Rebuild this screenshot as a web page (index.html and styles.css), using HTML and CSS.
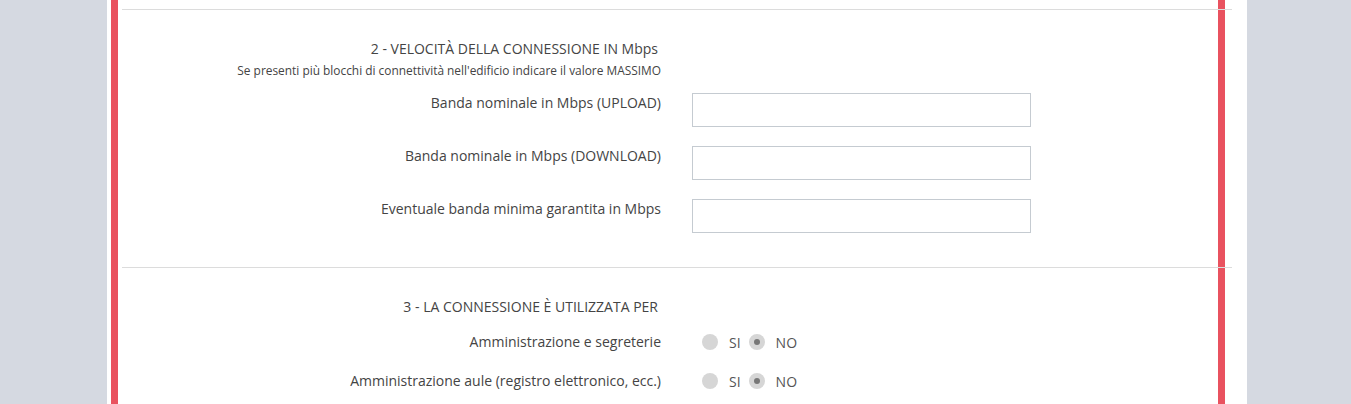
FILE: index.html
```html
<!DOCTYPE html>
<html lang="it">
<head>
  <meta charset="UTF-8">
  <title>Questionario connettività</title>
  <meta name="viewport" content="width=device-width, initial-scale=1">
  <link rel="stylesheet" href="styles.css">
</head>
<body>

  <div class="pagina">
    <div class="modulo">
      <hr class="separatore">

      <div class="sezione">
        <div class="titolo">
          <div class="titolo-testo">2 - VELOCITÀ DELLA CONNESSIONE IN Mbps</div>
          <div class="nota">Se presenti più blocchi di connettività nell'edificio indicare il valore MASSIMO</div>
        </div>

        <div class="riga">
          <label class="etichetta">Banda nominale in Mbps (UPLOAD)</label>
          <input type="text" class="campo">
        </div>
        <div class="riga">
          <label class="etichetta">Banda nominale in Mbps (DOWNLOAD)</label>
          <input type="text" class="campo">
        </div>
        <div class="riga">
          <label class="etichetta">Eventuale banda minima garantita in Mbps</label>
          <input type="text" class="campo">
        </div>
      </div>

      <hr class="separatore">

      <div class="sezione sezione-radio">
        <div class="titolo">
          <div class="titolo-testo">3 - LA CONNESSIONE È UTILIZZATA PER</div>
        </div>

        <div class="riga-radio">
          <label class="etichetta">Amministrazione e segreterie</label>
          <div class="scelte">
            <span class="radio"></span><span class="voce">SI</span>
            <span class="radio attivo"></span><span class="voce">NO</span>
          </div>
        </div>
        <div class="riga-radio">
          <label class="etichetta">Amministrazione aule (registro elettronico, ecc.)</label>
          <div class="scelte">
            <span class="radio"></span><span class="voce">SI</span>
            <span class="radio attivo"></span><span class="voce">NO</span>
          </div>
        </div>
      </div>
    </div>
  </div>

</body>
</html>
```

FILE: styles.css
```css
body {
  font-family: "Open Sans", Arial, sans-serif;
  background: #d5d9e1;
  color: #444;
  margin: 0;
  padding: 0;
  height: 404px;
  overflow: hidden;
}

.pagina {
  margin-left: 107px;
  width: 1140px;
  height: 404px;
  background: white;
  padding-left: 4px;
  box-sizing: border-box;
}

.modulo {
  width: 1114px;
  height: 404px;
  padding-top: 9px;
  border-left: 7px solid #e9525f;
  border-right: 7px solid #e9525f;
  box-sizing: border-box;
}

.separatore {
  border: none;
  border-top: 1px solid #dcdcdc;
  margin: 0 -14px 0 4px;
  position: relative;
}

.sezione {
  padding-top: 30px;
  padding-bottom: 15px;
}

.sezione-radio {
  padding-bottom: 0;
}

.titolo {
  width: 543px;
  text-align: right;
  margin-bottom: 16px;
}

.titolo-testo {
  font-size: 14px;
  line-height: 18px;
  padding-right: 3px;
}

.nota {
  font-size: 11.9px;
  line-height: 14px;
  margin-top: 5px;
}

.riga {
  display: flex;
  align-items: flex-start;
  margin-bottom: 19px;
}

.etichetta {
  width: 543px;
  text-align: right;
  font-size: 14px;
  line-height: 18px;
  padding-top: 1px;
  flex-shrink: 0;
}

.campo {
  margin-left: 31px;
  width: 339px;
  height: 34px;
  box-sizing: border-box;
  border: 1px solid #c5cbd1;
  border-radius: 0;
  padding: 6px 10px;
  font-size: 14px;
}

.riga-radio {
  display: flex;
  align-items: center;
  height: 18px;
  margin-bottom: 21px;
}

.riga-radio .etichetta {
  padding-top: 0;
}

.sezione-radio .titolo {
  margin-bottom: 17px;
}

.scelte {
  display: flex;
  align-items: center;
  margin-left: 41px;
  font-size: 14px;
  color: #555;
}

.radio {
  width: 16px;
  height: 16px;
  border-radius: 50%;
  background: #d6d6d6;
  display: flex;
  align-items: center;
  justify-content: center;
}

.radio.attivo::after {
  content: "";
  width: 6px;
  height: 6px;
  border-radius: 50%;
  background: #777;
}

.voce {
  margin-left: 11px;
  margin-right: 8px;
}
```
